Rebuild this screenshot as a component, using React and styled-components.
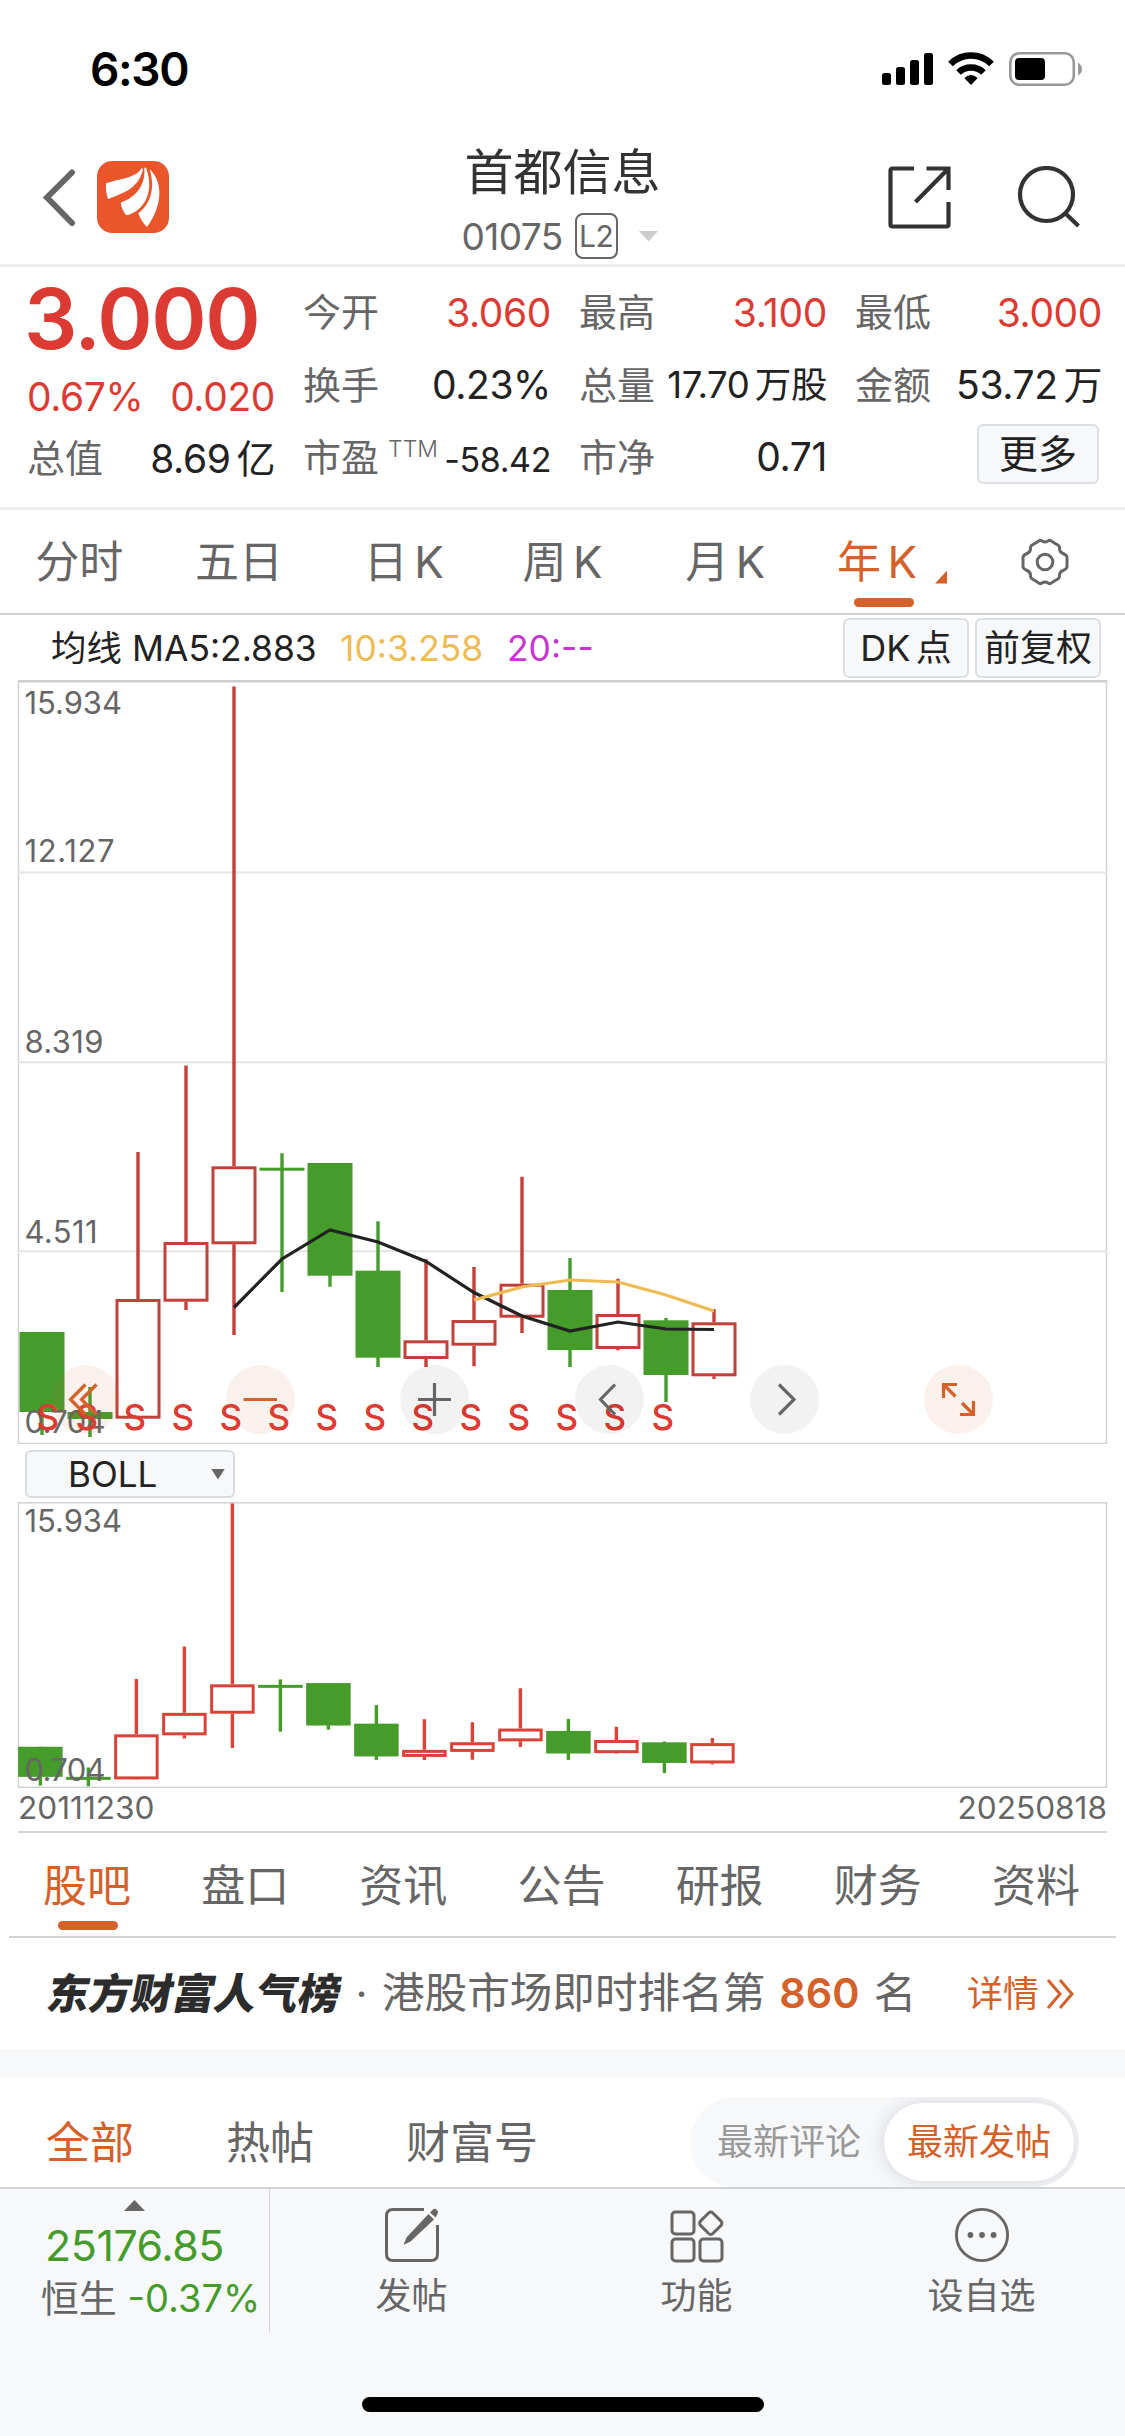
import styled, { createGlobalStyle } from "styled-components";

const RED = "#dc3b33";
const GREEN = "#459c2b";
const ORANGE = "#d4602a";
const GREY = "#666";
const DARK = "#222";
const LINE = "#d3d3d7";
const PANEL = "#f6f8fa";

// [bodyTop, bodyBottom, high, low] measured down from the top of the price range
const candles = [
  { up: false, y: [646, 726, 646, 749] },
  { up: false, y: [726, 733, 701, 751] },
  { up: true, y: [613, 732.7, 466, 732] },
  { up: true, y: [556, 615.7, 379.6, 624] },
  { up: true, y: [480.3, 558.3, 0.5, 649] },
  { up: false, y: [481.7, 484.7, 467.3, 606] },
  { up: false, y: [477, 589.7, 477, 600.7] },
  { up: false, y: [584.7, 671.7, 535.3, 681] },
  { up: true, y: [654.3, 673, 573.3, 681] },
  { up: true, y: [634, 659.7, 581, 680.3] },
  { up: true, y: [597.7, 631.7, 490.7, 647] },
  { up: false, y: [604, 664, 572, 681] },
  { up: true, y: [628, 663, 592.7, 664.3] },
  { up: false, y: [634.3, 689, 632, 716] },
  { up: true, y: [636.3, 690.3, 623, 693] },
];

const ma5 = [621.5, 573, 544, 556, 575.5, 606.5, 630, 645, 636, 643, 643.5];
const ma10 = [614, 601, 594, 596, 609, 625];

const periods = [
  { name: "分时", shift: -1 },
  { name: "五日", shift: -2 },
  { name: "日", k: true, shift: 2 },
  { name: "周", k: true },
  { name: "月", k: true, shift: 2 },
  { name: "年", k: true, active: true, shift: 8 },
];

const sections = ["股吧", "盘口", "资讯", "公告", "研报", "财务", "资料"];

const Candles = ({ scale = 1, left, top, width, red }) =>
  candles.map(({ up, y }, i) => {
    const [bodyTop, bodyBottom, high, low] = y.map((v) => top + v * scale);
    const x = left + i * 48;
    const color = up ? red : GREEN;
    const height = Math.max(bodyBottom - bodyTop, 3);
    return (
      <g key={i} stroke={color} strokeWidth="3.4" fill="none">
        {up ? (
          <>
            <path d={`M${x} ${high}V${bodyTop}M${x} ${bodyBottom}V${low}`} />
            <rect
              x={x - width / 2 + 1.5}
              y={bodyTop + 1.5}
              width={width - 3}
              height={height - 3}
              strokeWidth="3"
            />
          </>
        ) : (
          <>
            <path d={`M${x} ${high}V${low}`} />
            <rect
              x={x - width / 2}
              y={bodyTop}
              width={width}
              height={height}
              fill={color}
              stroke="none"
            />
          </>
        )}
      </g>
    );
  });

const toPoints = (values, start) =>
  values.map((v, i) => `${42 + (start + i) * 48},${v + 6}`).join(" ");

const MainChart = () => (
  <ChartSvg viewBox="0 0 1125 764" $height={764}>
    <path d="M18.5 0V763.5H1106.5V0" fill="none" stroke={LINE} strokeWidth="1.5" />
    <path d="M18 1.2H1107" stroke="#cdced2" strokeWidth="2.4" />
    <path d="M18 192.5H1107M18 382.3H1107M18 571.3H1107" stroke="#e3e3e8" strokeWidth="2" />
    <Candles left={42} top={6} width={45} red="#c4403b" />
    <polyline points={toPoints(ma5, 4)} fill="none" stroke={DARK} strokeWidth="3.2" />
    <polyline points={toPoints(ma10, 9)} fill="none" stroke="#eebb52" strokeWidth="3.2" />
    <g fill={GREY} fontSize="31">
      <text x="24.5" y="34" textLength="97.5">15.934</text>
      <text x="24.5" y="182" textLength="90">12.127</text>
      <text x="24.5" y="373" textLength="79">8.319</text>
      <text x="24.5" y="563" textLength="73">4.511</text>
      <text x="24.5" y="753" textLength="81">0.704</text>
    </g>
    <g fill={RED} fontSize="35" fontWeight="500" textAnchor="middle">
      {candles.slice(0, 14).map((c, i) => (
        <text key={i} x={i === 0 ? 47.7 : 38.7 + i * 48} y="750">S</text>
      ))}
    </g>
  </ChartSvg>
);

const BollChart = () => (
  <ChartSvg viewBox="0 0 1125 287" $height={287}>
    <rect x="18.5" y="0.8" width="1088" height="284.5" fill="none" stroke={LINE} strokeWidth="1.5" />
    <Candles left={40.4} top={1.4} scale={0.3767} width={44.5} red="#da4238" />
    <g fill={GREY} fontSize="31">
      <text x="24.5" y="30" textLength="97.5">15.934</text>
      <text x="24.5" y="279" textLength="81">0.704</text>
    </g>
  </ChartSvg>
);

const Logo = () => (
  <svg width="72" height="72" viewBox="0 0 216 216">
    <rect width="216" height="216" rx="46" fill="#e9562b" />
    <g fill="#fff">
      <path d="M134 20C118 52 68 52 27 67C26 84 28 99 33 114C88 92 122 82 138 26Z" />
      <path d="M142 20C146 72 118 108 71 125C73 140 79 152 88 163C142 150 174 92 147 20Z" />
      <path d="M158 24C174 80 164 125 124 157C130 174 138 187 150 198C186 150 208 74 158 24Z" />
    </g>
  </svg>
);

const StatusIcons = () => (
  <svg width="204" height="36" viewBox="880 51 204 36">
    <rect x="882" y="73" width="9" height="12" rx="2.5" />
    <rect x="896" y="67" width="9" height="18" rx="2.5" />
    <rect x="910" y="60" width="9" height="25" rx="2.5" />
    <rect x="924" y="53" width="9" height="32" rx="2.5" />
    <path d="M950.5 64A29 29 0 0 1 991.5 64" fill="none" stroke="#000" strokeWidth="6.6" />
    <path d="M958.5 72.5A18 18 0 0 1 983.5 72.5" fill="none" stroke="#000" strokeWidth="6.6" />
    <path d="M971 85L964.3 78Q971 71.8 977.7 78Z" />
    <rect x="1010.3" y="53.3" width="63.5" height="31.5" rx="9" fill="none" stroke="#999" strokeWidth="2.6" />
    <rect x="1015" y="58" width="30" height="22" rx="4" />
    <path d="M1078 62.5Q1082 65 1082 69T1078 75.5Z" fill="#999" />
  </svg>
);

const App = () => {
  return (
    <Screen>
      <GlobalStyle />
      <StatusBar>
        <Clock>6:30</Clock>
        <StatusIcons />
      </StatusBar>

      <Header>
        <HeaderSide>
          <svg width="34" height="60" viewBox="0 0 34 60">
            <path d="M30 5.5L5 30.500L30 56" fill="none" stroke={GREY} strokeWidth="6" strokeLinecap="round" />
          </svg>
          <Logo />
        </HeaderSide>
        <HeaderTitle>
          <StockName>首都信息</StockName>
          <StockCode>
            <span>01075</span>
            <LevelBadge>L2</LevelBadge>
            <Triangle $w={20} $h={11} $color="#ccc" />
          </StockCode>
        </HeaderTitle>
        <HeaderActions>
          <svg width="64" height="64" viewBox="0 0 64 64" fill="none" stroke="#333" strokeWidth="4.2">
            <path d="M26 2.5H4.5Q2.5 2.5 2.5 4.5V58.5Q2.5 60.5 4.5 60.5H58.5Q60.5 60.5 60.5 58.5V36" />
            <path d="M38.5 2.5H60.5V24M60 3L27.5 36" />
          </svg>
          <svg width="64" height="64" viewBox="0 0 64 64" fill="none" stroke="#333" strokeWidth="4.2">
            <circle cx="30.5" cy="28.5" r="26.5" />
            <path d="M49.5 47.5L62.5 60" />
          </svg>
        </HeaderActions>
      </Header>

      <Quote>
        <QuotePrice>
          <Price>3.000</Price>
          <QuoteRow $h={68}>
            <Value $color={RED}>0.67%</Value>
            <Value $color={RED}>0.020</Value>
          </QuoteRow>
          <QuoteRow $h={56}>
            <Label>总值</Label>
            <Value>8.69<Unit>亿</Unit></Value>
          </QuoteRow>
        </QuotePrice>
        <QuoteGrid>
          <QuoteRow><Label>今开</Label><Value $color={RED}>3.060</Value></QuoteRow>
          <QuoteRow><Label>最高</Label><Value $color={RED}>3.100</Value></QuoteRow>
          <QuoteRow><Label>最低</Label><Value $color={RED}>3.000</Value></QuoteRow>
          <QuoteRow><Label>换手</Label><Value>0.23%</Value></QuoteRow>
          <QuoteRow><Label>总量</Label><Value $size={36.5} $drop={2}>17.70<Unit>万股</Unit></Value></QuoteRow>
          <QuoteRow><Label>金额</Label><Value>53.72<Unit>万</Unit></Value></QuoteRow>
          <QuoteRow>
            <Label>市盈<Ttm>TTM</Ttm></Label>
            <Value $size={34} $drop={6}>-58.42</Value>
          </QuoteRow>
          <QuoteRow><Label>市净</Label><Value>0.71</Value></QuoteRow>
          <QuoteRow $end><MoreButton>更多</MoreButton></QuoteRow>
        </QuoteGrid>
      </Quote>

      <PeriodTabs>
        {periods.map((p) => (
          <Tab key={p.name} $active={p.active}>
            <TabText $shift={p.shift}>
              {p.name}
              {p.k && <Unit>K</Unit>}
              {p.active && <Corner />}
            </TabText>
            {p.active && <TabLine />}
          </Tab>
        ))}
        <Tab>
          <svg width="50" height="50" viewBox="0 0 50 50" fill="none" stroke={GREY} strokeWidth="3">
            <path d="M18 4.5Q20 2.5 22 4Q25 6 28 4Q30 2.5 32 4.5L38.5 8.5Q40 10 39.5 12Q39.5 15 43 16.5Q46.5 18 47 20V30Q46.5 32 43 33.5Q39.5 35 39.5 38Q40 40 38.5 41.5L32 45.5Q30 47.5 28 46Q25 44 22 46Q20 47.5 18 45.5L11.5 41.5Q10 40 10.5 38Q10.5 35 7 33.5Q3.5 32 3 30V20Q3.5 18 7 16.5Q10.5 15 10.5 12Q10 10 11.5 8.5Z" strokeLinejoin="round" />
            <circle cx="25" cy="25" r="7.8" />
          </svg>
        </Tab>
      </PeriodTabs>

      <MaBar>
        <MaText $width={81}>均线</MaText>
        <MaText $width={208}>MA5:2.883</MaText>
        <MaText $width={167} $color="#efbb55">10:3.258</MaText>
        <MaText $color="#c936cf">20:--</MaText>
        <MaButtons>
          <SmallButton>DK<Unit>点</Unit></SmallButton>
          <SmallButton>前复权</SmallButton>
        </MaButtons>
      </MaBar>

      <ChartArea>
        <MainChart />
        <ChartTools>
          <Tool $warm><path d="M34.5 19.5L19.5 34.5L34.5 49.5M45.5 19.5L30.5 34.5L45.5 49.5" /></Tool>
          <Tool $warm><path d="M17.5 34.5H51" /></Tool>
          <Tool><path d="M18 34.5H51M34.5 18V51" /></Tool>
          <Tool><path d="M40 19.5L25.5 34.5L40 49.5" /></Tool>
          <Tool><path d="M29 19.5L44 34.5L29 49.5" /></Tool>
          <Tool $warm><path d="M33 19.5H19.5V33M20 20L31.5 31.5M36 49.5H49.5V36M49 49L38 38" /></Tool>
        </ChartTools>
      </ChartArea>

      <IndicatorBar>
        <IndicatorSelect>
          <span>BOLL</span>
          <Triangle $w={14} $h={11} $color={GREY} />
        </IndicatorSelect>
      </IndicatorBar>
      <BollChart />
      <Dates>
        <span>20111230</span>
        <span>20250818</span>
      </Dates>

      <SectionTabs>
        {sections.map((name, i) => (
          <Tab key={name} $active={i === 0}>
            <TabText $shift={-1} $drop={3}>{name}</TabText>
            {i === 0 && <TabLine />}
          </Tab>
        ))}
      </SectionTabs>

      <RankBar>
        <RankLogo>东方财富人气榜</RankLogo>
        <RankDot>·</RankDot>
        <RankText>港股市场即时排名第</RankText>
        <RankNumber>860</RankNumber>
        <RankText>名</RankText>
        <RankLink>
          详情
          <svg width="30" height="32" viewBox="0 0 30 32" fill="none" stroke={ORANGE} strokeWidth="3">
            <path d="M2 2L14 16L2 30M14 2L26 16L14 30" />
          </svg>
        </RankLink>
      </RankBar>
      <Gap />

      <Filters>
        <Filter $active>全部</Filter>
        <Filter>热帖</Filter>
        <Filter>财富号</Filter>
        <Switch>
          <SwitchItem>最新评论</SwitchItem>
          <SwitchItem $active>最新发帖</SwitchItem>
        </Switch>
      </Filters>

      <BottomBar>
        <IndexBox>
          <Triangle $w={21} $h={11} $color={GREY} $up />
          <IndexValue>25176.85</IndexValue>
          <IndexName>恒生 <em>-0.37%</em></IndexName>
        </IndexBox>
        <Action>
          <svg width="56" height="56" viewBox="0 0 56 56" fill="none" stroke={GREY} strokeWidth="3">
            <path d="M40 2.5H9Q2.5 2.5 2.5 9V47Q2.5 53.5 9 53.5H47Q53.5 53.5 53.5 47V18" />
            <path d="M44.5 7L50 12.5L26.5 34.5L19.5 38L22.5 30.5Z" fill={GREY} stroke="none" />
            <path d="M46 5.5L49 2.5Q51 1 53 3Q55 5 53.5 7L51.5 10.5Z" fill={GREY} stroke="none" />
          </svg>
          <span>发帖</span>
        </Action>
        <Action>
          <svg width="56" height="56" viewBox="0 0 56 56" fill="none" stroke={GREY} strokeWidth="3">
            <rect x="3" y="5" width="22" height="22" rx="3.5" />
            <rect x="3" y="32" width="22" height="22" rx="3.5" />
            <rect x="31" y="32" width="22" height="22" rx="3.5" />
            <rect x="33" y="7.5" width="17.5" height="17.5" rx="3" transform="rotate(45 41.75 16.25)" />
          </svg>
          <span>功能</span>
        </Action>
        <Action>
          <svg width="58" height="58" viewBox="0 0 58 58" fill={GREY}>
            <circle cx="29" cy="29" r="26.5" fill="none" stroke={GREY} strokeWidth="3" />
            <circle cx="17" cy="29" r="3" />
            <circle cx="29" cy="29" r="3" />
            <circle cx="41" cy="29" r="3" />
          </svg>
          <span>设自选</span>
        </Action>
      </BottomBar>
      <HomeArea>
        <HomeIndicator />
      </HomeArea>
    </Screen>
  );
};

export default App;

const GlobalStyle = createGlobalStyle`
  * {
    box-sizing: border-box;
  }

  body {
    margin: 0;
    background: #fff;
    font-family: Inter, "Noto Sans CJK SC", sans-serif;
    line-height: 1;
  }

  svg {
    display: block;
    flex-shrink: 0;
  }
`;

const Screen = styled.div`
  width: 1125px;
  height: 2436px;
  display: flex;
  flex-direction: column;
  overflow: hidden;
  background: #fff;
  color: ${DARK};
  white-space: nowrap;

  > * {
    flex-shrink: 0;
  }
`;

const StatusBar = styled.div`
  height: 138px;
  padding: 0 41px 0 90px;
  display: flex;
  align-items: center;
  justify-content: space-between;
`;

const Clock = styled.div`
  font-size: 46px;
  font-weight: 600;
  letter-spacing: -1.4px;
  color: #000;
`;

const Header = styled.header`
  height: 129px;
  display: grid;
  grid-template-columns: 300px 1fr 300px;
  border-bottom: 3px solid #eee;
`;

const HeaderSide = styled.div`
  padding: 9px 0 0 42px;
  display: flex;
  align-items: center;
  gap: 21px;
  height: 109px;
`;

const HeaderTitle = styled.div`
  display: flex;
  flex-direction: column;
  align-items: center;
  padding-top: 10px;
`;

const StockName = styled.h1`
  margin: 0;
  font-size: 49px;
  font-weight: 400;
  color: #333;
`;

const StockCode = styled.div`
  margin-top: 16px;
  width: 202px;
  display: flex;
  align-items: center;
  font-size: 37px;
  letter-spacing: -0.6px;
  color: ${GREY};

  > :last-child {
    margin: 0 5px 0 auto;
  }
`;

const LevelBadge = styled.div`
  margin-left: 12px;
  width: 43px;
  height: 46px;
  border: 2px solid ${GREY};
  border-radius: 8px;
  display: flex;
  align-items: center;
  justify-content: center;
  font-size: 30px;
`;

const Triangle = styled.i`
  width: ${({ $w }) => $w}px;
  height: ${({ $h }) => $h}px;
  background: ${({ $color }) => $color};
  clip-path: ${({ $up }) =>
    $up ? "polygon(50% 0, 100% 100%, 0 100%)" : "polygon(0 0, 100% 0, 50% 100%)"};
`;

const HeaderActions = styled.div`
  padding: 28px 45px 0 0;
  display: flex;
  justify-content: flex-end;
  gap: 64px;
`;

const Quote = styled.section`
  height: 243px;
  padding: 8px 23px 0 27px;
  display: flex;
  gap: 28px;
  border-bottom: 3px solid #eee;
`;

const QuotePrice = styled.div`
  width: 248px;
`;

const Price = styled.div`
  height: 87px;
  margin-left: -3px;
  display: flex;
  align-items: center;
  font-size: 84px;
  font-weight: 600;
  letter-spacing: -1.4px;
  color: ${RED};
`;

const QuoteGrid = styled.div`
  flex: 1;
  display: grid;
  grid-template-columns: 248px 248px 247px;
  grid-template-rows: 74px 71px 73px;
  column-gap: 28px;
`;

const QuoteRow = styled.div`
  height: ${({ $h }) => ($h ? `${$h}px` : "auto")};
  display: flex;
  align-items: center;
  justify-content: ${({ $end }) => ($end ? "flex-end" : "space-between")};
`;

const Label = styled.span`
  display: flex;
  font-size: 38px;
  color: ${GREY};
`;

const Ttm = styled.sup`
  margin: 0 0 0 9px;
  font-size: 23px;
  font-weight: 300;
`;

const Value = styled.span`
  font-size: ${({ $size }) => $size || 39}px;
  letter-spacing: -0.4px;
  color: ${({ $color }) => $color || DARK};
  padding-top: ${({ $drop }) => $drop || 0}px;
`;

const Unit = styled.span`
  margin-left: 0.15em;
`;

const MoreButton = styled.div`
  width: 122px;
  height: 60px;
  margin: -6px 3px 0 0;
  display: flex;
  align-items: center;
  justify-content: center;
  border: 2px solid #dcdfe3;
  border-radius: 6px;
  background: ${PANEL};
  font-size: 39px;
`;

const PeriodTabs = styled.nav`
  height: 105px;
  display: flex;
  border-bottom: 2px solid ${LINE};
`;

const Tab = styled.div`
  position: relative;
  flex: 1;
  display: flex;
  align-items: center;
  justify-content: center;
  font-size: 44px;
  color: ${({ $active }) => ($active ? ORANGE : GREY)};
`;

const TabText = styled.span`
  display: flex;
  align-items: flex-end;
  padding-top: ${({ $drop }) => $drop || 0}px;
  transform: translateX(${({ $shift }) => $shift || 0}px);
`;

const TabLine = styled.i`
  position: absolute;
  bottom: 6px;
  left: calc(50% - 30px);
  width: 60px;
  height: 9px;
  border-radius: 5px;
  background: ${ORANGE};
`;

const Corner = styled.i`
  width: 12px;
  height: 13px;
  margin-left: 18px;
  background: ${ORANGE};
  clip-path: polygon(100% 0, 100% 100%, 0 100%);
`;

const MaBar = styled.div`
  height: 65px;
  padding: 0 24px 0 51px;
  display: flex;
  align-items: center;
`;

const MaText = styled.span`
  width: ${({ $width }) => ($width ? `${$width}px` : "auto")};
  padding-top: 2px;
  font-size: 35.4px;
  color: ${({ $color }) => $color || DARK};
`;

const MaButtons = styled.div`
  margin-left: auto;
  display: flex;
  gap: 6px;
`;

const SmallButton = styled.div`
  width: 126px;
  height: 60px;
  display: flex;
  align-items: center;
  justify-content: center;
  border: 2px solid #dcdfe3;
  border-radius: 6px;
  background: ${PANEL};
  font-size: 36px;
`;

const ChartArea = styled.div`
  position: relative;
`;

const ChartSvg = styled.svg`
  width: 1125px;
  height: ${({ $height }) => $height}px;
  font-family: Inter, sans-serif;
`;

const ChartTools = styled.div`
  position: absolute;
  left: 51px;
  bottom: 10px;
  display: flex;
  gap: 105.7px;
`;

const Tool = styled.svg.attrs({ viewBox: "0 0 69 69" })`
  width: 69px;
  height: 69px;
  border-radius: 50%;
  background: ${({ $warm }) => ($warm ? "rgba(212, 96, 42, 0.09)" : "rgba(0, 0, 0, 0.05)")};
  fill: none;
  stroke: ${({ $warm }) => ($warm ? ORANGE : GREY)};
  stroke-width: 3.2;
`;

const IndicatorBar = styled.div`
  height: 58px;
  padding: 6px 25px 0;
`;

const IndicatorSelect = styled.div`
  width: 210px;
  height: 48px;
  padding: 0 8px 0 41px;
  display: flex;
  align-items: center;
  justify-content: space-between;
  border: 2px solid #d9dce0;
  border-radius: 6px;
  background: ${PANEL};
  font-size: 35px;
`;

const Dates = styled.div`
  height: 44px;
  margin: 0 18px;
  padding-bottom: 4px;
  display: flex;
  align-items: center;
  justify-content: space-between;
  border-bottom: 2px solid ${LINE};
  font-size: 31.6px;
  color: ${GREY};
`;

const SectionTabs = styled.nav`
  height: 105px;
  margin: 0 9px;
  display: flex;
  border-bottom: 2px solid ${LINE};
`;

const RankBar = styled.div`
  height: 111px;
  padding: 0 49px 0 48px;
  display: flex;
  align-items: center;
`;

const RankLogo = styled.div`
  width: 293px;
  font-size: 42px;
  font-weight: 900;
  letter-spacing: -0.2px;
  color: #2c2c2c;
  transform: skewX(-11deg);
`;

const RankDot = styled.span`
  width: 41px;
  text-align: center;
  font-size: 42px;
  color: ${GREY};
`;

const RankText = styled.span`
  font-size: 42.6px;
  color: ${GREY};
`;

const RankNumber = styled.b`
  margin: 0 14px;
  font-size: 41.4px;
  font-weight: 600;
  color: ${ORANGE};
`;

const RankLink = styled.span`
  margin-left: auto;
  display: flex;
  align-items: center;
  gap: 7px;
  font-size: 36px;
  color: ${ORANGE};
`;

const Gap = styled.div`
  height: 29px;
  background: ${PANEL};
`;

const Filters = styled.div`
  height: 109px;
  padding: 19px 46px 0 46px;
  display: flex;
  align-items: center;
  gap: 92px;
`;

const Filter = styled.span`
  font-size: 44px;
  padding-top: 2px;
  color: ${({ $active }) => ($active ? ORANGE : GREY)};
`;

const Switch = styled.div`
  width: 389px;
  height: 90px;
  margin-left: auto;
  padding: 6px 5px 6px 6px;
  display: flex;
  justify-content: space-between;
  border-radius: 45px;
  background: ${PANEL};
  overflow: hidden;
`;

const SwitchItem = styled.span`
  width: ${({ $active }) => ($active ? 190 : 186)}px;
  height: 78px;
  display: flex;
  align-items: center;
  justify-content: center;
  border-radius: 39px;
  font-size: 36px;
  color: ${({ $active }) => ($active ? ORANGE : "#999")};
  background: ${({ $active }) => ($active ? "#fff" : "none")};
  box-shadow: ${({ $active }) => ($active ? "0 0 18px rgba(60, 50, 80, 0.18)" : "none")};
`;

const BottomBar = styled.div`
  height: 146px;
  display: flex;
  border-top: 2px solid #cfd2d7;
  background: ${PANEL};
`;

const IndexBox = styled.div`
  width: 270px;
  padding-top: 11px;
  display: flex;
  flex-direction: column;
  align-items: center;
  border-right: 1.5px solid ${LINE};
`;

const IndexValue = styled.div`
  margin-top: 13px;
  font-size: 43px;
  letter-spacing: -0.5px;
  color: ${GREEN};
`;

const IndexName = styled.div`
  margin: 12px 0 0 32px;
  font-size: 38px;
  color: ${GREY};

  em {
    font-style: normal;
    color: ${GREEN};
  }
`;

const Action = styled.div`
  flex: 1;
  display: flex;
  flex-direction: column;
  align-items: center;
  justify-content: space-between;
  padding: 18px 2px 19px 0;
  font-size: 36px;
  color: ${GREY};

  svg {
    height: 56px;
  }
`;

const HomeArea = styled.div`
  flex: 1;
  padding-top: 64px;
  display: flex;
  justify-content: center;
  background: ${PANEL};
`;

const HomeIndicator = styled.div`
  width: 402px;
  height: 15px;
  border-radius: 8px;
  background: #000;
`;
